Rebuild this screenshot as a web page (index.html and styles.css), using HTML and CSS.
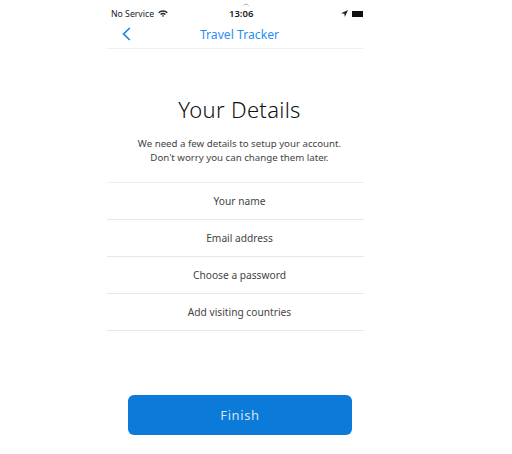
FILE: index.html

```html
<!DOCTYPE html>
<html lang="en">
<head>
    <meta charset="UTF-8">
    <meta name="viewport" content="width=device-width, initial-scale=1.0">
    <title>Travel Tracker | Your Details</title>
    <link rel="stylesheet" href="styles.css">
</head>
<body>

<div class="phone">
    <div class="status-bar">
        <svg class="spinner" width="6" height="3" viewBox="0 0 6 3"><path d="M0.5 2.5 A3 3 0 0 1 5.5 2.5" fill="none" stroke="#aaa" stroke-width="1"/></svg>
        <div class="status-left">
            <span>No Service</span>
            <svg class="wifi" width="10" height="7" viewBox="0 0 11 8">
                <path d="M0 2.6 A8 8 0 0 1 11 2.6 L9.8 3.8 A6.3 6.3 0 0 0 1.2 3.8 Z" fill="#222"/>
                <path d="M2.2 4.6 A5 5 0 0 1 8.8 4.6 L7.7 5.7 A3.4 3.4 0 0 0 3.3 5.7 Z" fill="#222"/>
                <path d="M4.2 6.5 A2 2 0 0 1 6.8 6.5 L5.5 8 Z" fill="#222"/>
            </svg>
        </div>
        <span class="status-time">13:06</span>
        <div class="status-right">
            <svg width="7" height="7" viewBox="0 0 8 8"><path d="M8 0 L0 3.6 L3.8 4.2 L4.4 8 Z" fill="#222"/></svg>
            <div class="battery"></div>
        </div>
    </div>

    <header class="nav-bar">
        <svg class="back" width="9" height="14" viewBox="0 0 9 14"><path d="M7.8 1 L1.6 7 L7.8 13" fill="none" stroke="#1a82f0" stroke-width="1.7"/></svg>
        <h1>Travel Tracker</h1>
    </header>

    <main class="content">
        <h2>Your Details</h2>
        <p>We need a few details to setup your account.<br>Don't worry you can change them later.</p>

        <ul class="fields">
            <li>Your name</li>
            <li>Email address</li>
            <li>Choose a password</li>
            <li>Add visiting countries</li>
        </ul>

        <button class="finish">Finish</button>
    </main>
</div>

</body>
</html>
```

FILE: styles.css

```css
body { margin: 0; background-color: white; font-family: "Noto Sans", "Open Sans", sans-serif; color: #222; }
.phone { width: 257px; margin-left: 107px; height: 454px; display: flex; flex-direction: column; }
.status-bar { height: 27px; padding: 0 1px 0 4px; display: flex; align-items: center; justify-content: space-between; position: relative; font-size: 8.7px; box-sizing: border-box; }
.status-left { display: flex; align-items: center; gap: 4px; }
.status-time { font-weight: 600; font-size: 9.5px; position: absolute; left: 122px; }
.status-right { display: flex; align-items: center; gap: 4px; }
.spinner { position: absolute; left: 136px; top: 3px; }
.battery { width: 11px; height: 6px; background-color: #111; }
.nav-bar { height: 21px; display: flex; align-items: center; justify-content: center; position: relative; border-bottom: 1px solid #f0f0f0; }
.nav-bar h1 { margin: 0 0 7px; font-size: 12.2px; font-weight: 400; color: #2b8ef5; position: relative; left: 4px; }
.back { position: absolute; left: 15px; top: 0; }
.content { flex: 1; display: flex; flex-direction: column; align-items: stretch; }
.content h2 { margin: 45px 0 0 8px; font-size: 22px; line-height: 30px; font-weight: 300; text-align: center; color: #111; letter-spacing: 0.3px; }
.content p { margin: 13px 0 0 8px; font-size: 9.7px; line-height: 13.5px; text-align: center; color: #444; }
.fields { list-style: none; margin: 18px 0 0; padding: 0; border-top: 1px solid #eee; }
.fields li { height: 36px; line-height: 36px; border-bottom: 1px solid #e8e8e8; text-align: center; font-size: 10.2px; color: #444; padding-left: 8px; }
.finish { width: 224px; height: 40px; margin: 64px 0 0 21px; background-color: #0b7ad8; border: none; border-radius: 6px; color: #cfe4f7; font-family: inherit; font-size: 13px; letter-spacing: 0.6px; }
```
